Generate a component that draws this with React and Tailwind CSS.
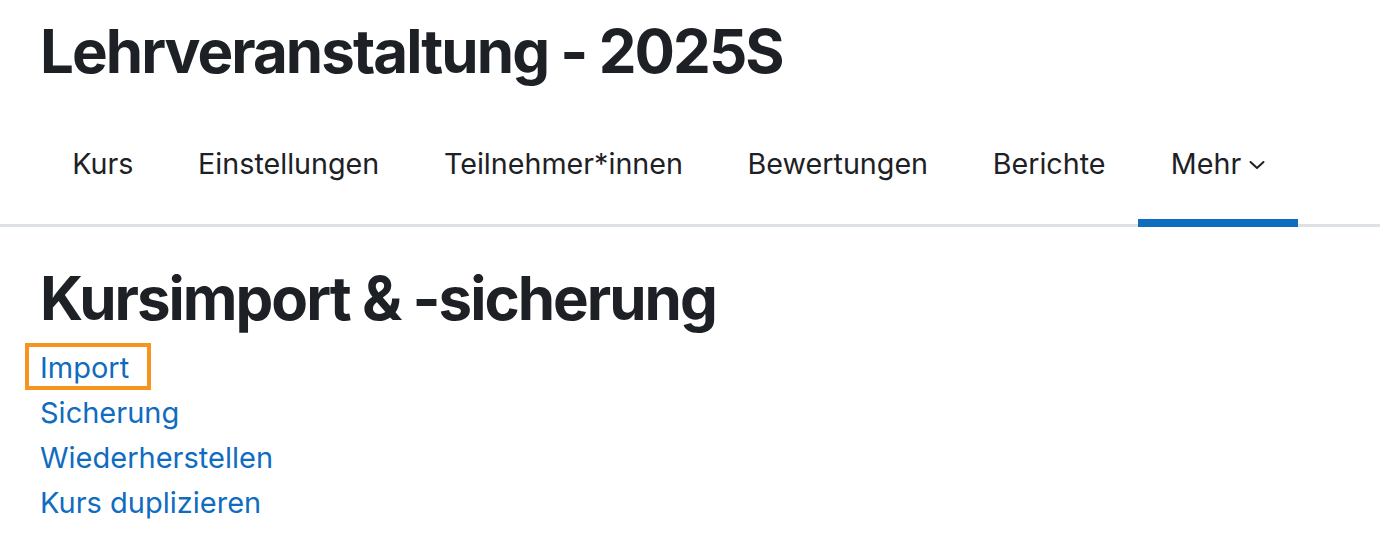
export default function App() {
  const items = ["Kurs", "Einstellungen", "Teilnehmer*innen", "Bewertungen", "Berichte"];
  return (
    <div className="w-[1380px] h-[554px] bg-white text-[#1d2125] font-['Inter',sans-serif] overflow-hidden">
      <h1 className="px-[40px] pt-[20px] text-[60px] leading-[62px] font-bold tracking-[-1.95px]">
        Lehrveranstaltung - 2025S
      </h1>
      <nav className="mt-[22px] border-b-[3px] border-[#dee2e6]">
        <ul className="flex px-[40px]">
          {items.map((t) => (
            <li key={t} className="h-[120px] flex items-center px-[32.3px] text-[28.7px]">
              {t}
            </li>
          ))}
          <li className="relative h-[120px] flex items-center px-[33px] text-[28.7px]">
            <span>Mehr</span>
            <svg width="16" height="10" viewBox="0 0 16 10" className="ml-[8px] mt-[1px]">
              <path d="M1.5 2 L8 8 L14.5 2" fill="none" stroke="#1d2125" strokeWidth="2" strokeLinecap="round" strokeLinejoin="round" />
            </svg>
            <span className="absolute left-0 right-0 bottom-[-3px] h-[8px] bg-[#0f6cbf]" />
          </li>
        </ul>
      </nav>
      <h2 className="px-[40px] mt-[40px] text-[60px] leading-[62px] font-bold tracking-[-2px]">
        Kursimport &amp; -sicherung
      </h2>
      <ul className="px-[40px] mt-[16px] text-[29px] leading-[45px] text-[#0f6cbf]">
        <li>
          <a className="relative inline-block">
            Import
            <span className="absolute left-[-15px] right-[-22px] top-[-2px] bottom-0 border-4 border-[#f7941d]" />
          </a>
        </li>
        <li>Sicherung</li>
        <li>Wiederherstellen</li>
        <li>Kurs duplizieren</li>
      </ul>
    </div>
  );
}
